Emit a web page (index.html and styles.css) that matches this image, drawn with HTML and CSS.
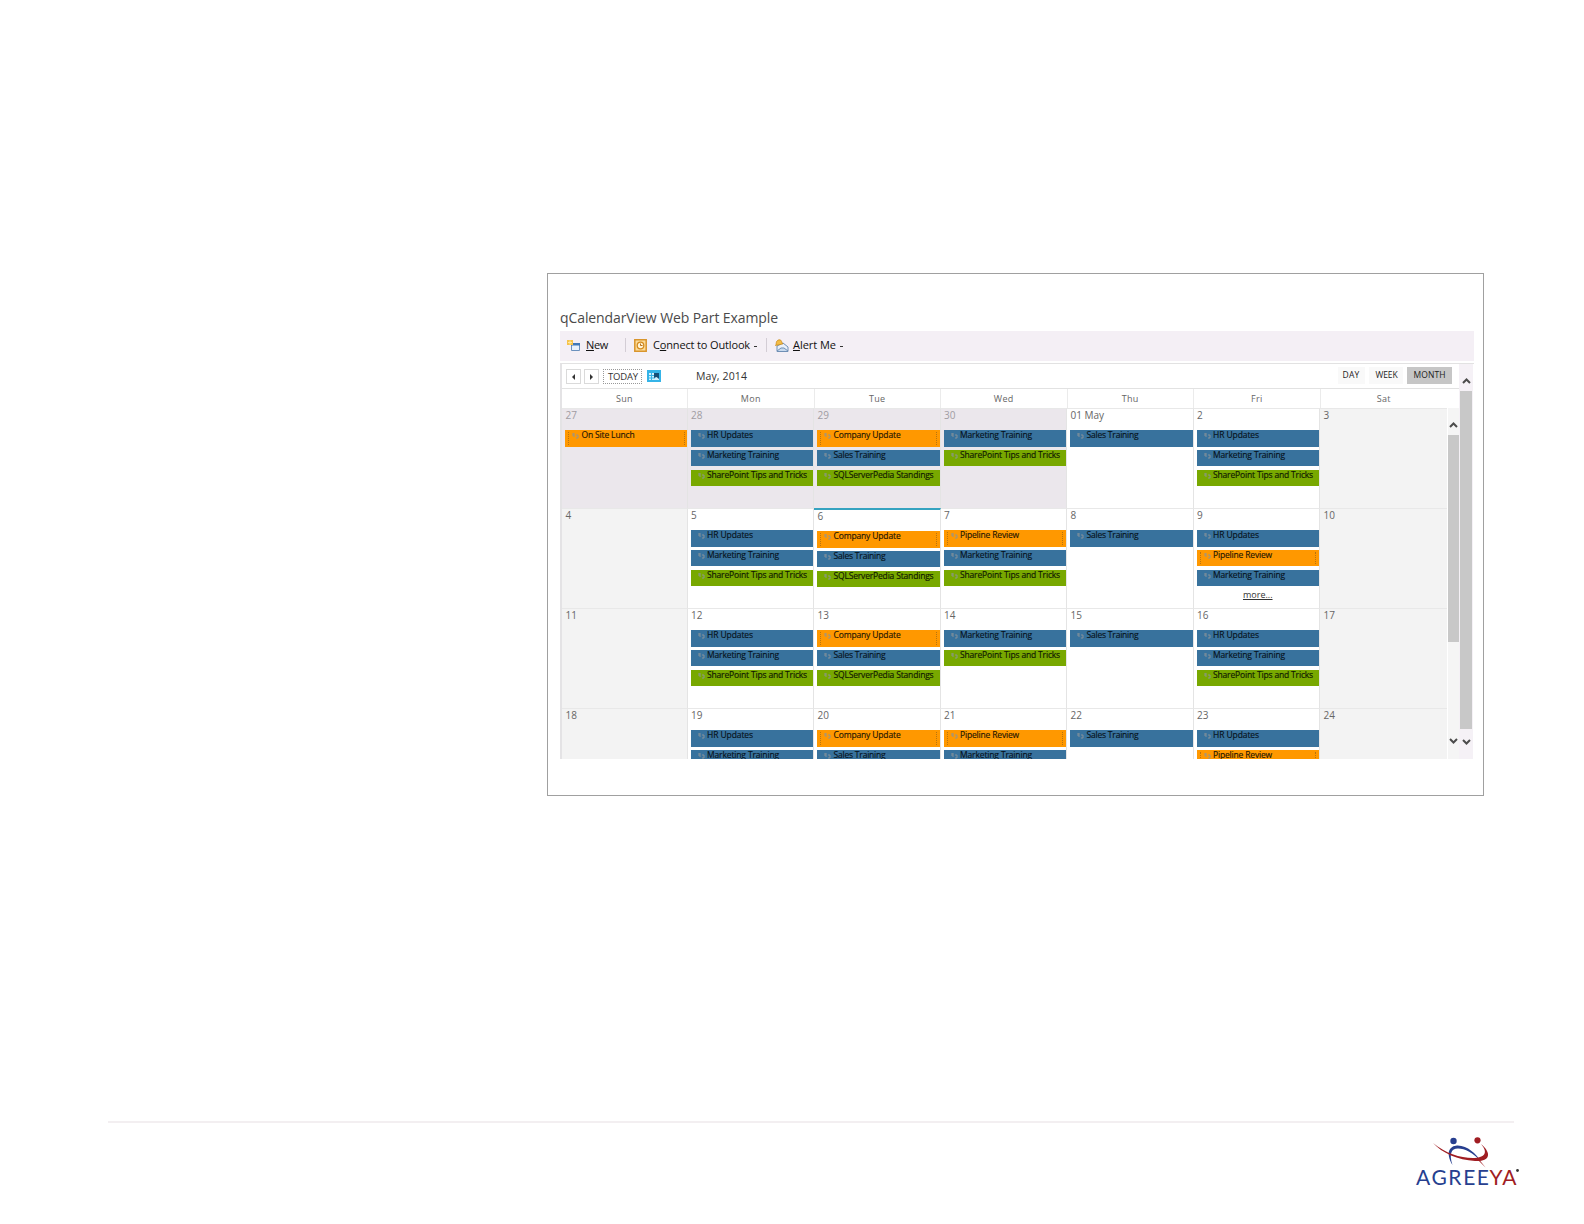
FILE: index.html
```html
<!DOCTYPE html>
<html lang="en">
<head>
<meta charset="utf-8">
<title>qCalendarView Web Part Example</title>
<link rel="stylesheet" href="styles.css">
</head>
<body>
<main class="frame">
  <h1 class="title"><span class="fit" data-w="218">qCalendarView Web Part Example</span></h1>
  <div class="toolbar">
    <svg class="tool-icon new-icon" width="13" height="12" viewBox="0 0 13 12"><path d="M4.500 4.500h8v7h-8z" fill="#e8f1fb" stroke="#6b91bd"/><path d="M4 4h9v2.500H4z" fill="#3f78b8"/><path d="M0 1h6v5H0z" fill="#f6c34b"/><path d="M1 3.500h4M3 1.500v4" stroke="#ffeaa0"/></svg>
    <span class="tool new"><span class="fit" data-w="22"><u>N</u>ew</span></span>
    <i class="sep"></i>
    <svg class="tool-icon out-icon" width="13" height="13" viewBox="0 0 13 13"><path d="M.8.8h11.400v11.400H.8z" fill="#fbdc9c" stroke="#d9952c" stroke-width="1.500"/><circle cx="6.500" cy="6.500" r="3.300" fill="#fff4d6" stroke="#d58b20" stroke-width="1.300"/><path d="M6.500 4.500v2h2" fill="none" stroke="#b8701a"/></svg>
    <span class="tool out"><span class="fit" data-w="97">C<u>o</u>nnect to Outlook</span></span><i class="caret"></i>
    <i class="sep sep2"></i>
    <svg class="tool-icon alert-icon" width="14" height="13" viewBox="0 0 14 13"><path d="M2 7l6-3 5 4v4.500H2z" fill="#eaf1fa" stroke="#6f8fb5"/><path d="M2 12l4-3h3l4 3" fill="#c8daee" stroke="#6f8fb5"/><path d="M.5 6.500C2 5 0 2 4 .8c3.500 0 2 3 4 4z" fill="#f4bd45" stroke="#c98a1d" stroke-width=".8"/></svg>
    <span class="tool alert"><span class="fit" data-w="43"><u>A</u>lert Me</span></span><i class="caret"></i>
  </div>
  <section class="calendar">
    <div class="main">
      <div class="nav">
        <span class="arrow"><svg width="3" height="6" viewBox="0 0 3 6"><path d="M3 0v6L0 3z" fill="#333"/></svg></span>
        <span class="arrow"><svg width="3" height="6" viewBox="0 0 3 6"><path d="M0 0v6l3-3z" fill="#333"/></svg></span>
        <span class="today"><span class="fit" data-w="30">TODAY</span></span>
        <svg class="picker" width="14" height="12" viewBox="0 0 14 12"><path d="M0 0h14v12H0z" fill="#35b4e8"/><path d="M2 3h10v7H2z" fill="#d4f0fc"/><path d="M2 5.500h6M2 8h6M4.500 3v7" stroke="#35b4e8"/><path d="M7 3h5v6L9.500 7 7 8z" fill="#174f78"/></svg>
        <span class="month"><span class="fit" data-w="51">May, 2014</span></span>
        <span class="view day"><span class="fit" data-w="17">DAY</span></span>
        <span class="view week"><span class="fit" data-w="22">WEEK</span></span>
        <span class="view on"><span class="fit" data-w="32">MONTH</span></span>
      </div>
      <div class="heads" id="heads"></div>
      <div class="body">
        <div class="grid" id="grid"></div>
        <div class="bar inner"><svg width="9" height="6" viewBox="0 0 9 6"><path d="M1 5l3.500-3.500L8 5" /></svg><i></i><svg width="9" height="6" viewBox="0 0 9 6"><path d="M1 1l3.500 3.500L8 1"/></svg></div>
      </div>
    </div>
    <div class="bar outer"><svg width="9" height="6" viewBox="0 0 9 6"><path d="M1 5l3.500-3.500L8 5"/></svg><i></i><svg width="9" height="6" viewBox="0 0 9 6"><path d="M1 1l3.500 3.500L8 1"/></svg></div>
  </section>
</main>
<footer class="footer">
  <svg class="logo" width="106" height="52" viewBox="0 0 106 52">
    <circle cx="38.500" cy="6" r="3.200" fill="#273f8f"/><circle cx="62.500" cy="5.300" r="3.100" fill="#a01d22"/>
    <path d="M37.500 30C30 17 35 11 42 10.500C52 10 61 19 66 26C58 18 50 13.500 43 13.500C36 13.500 34 19 37.500 30Z" fill="#273f8f"/>
    <path d="M18 8C30 18 45 23 58 23C69 23 74 18 66 9C78 19 74 27 60 26C43 25 27 18 18 8Z" fill="#a01d22"/>
    <path d="M62 22L70.500 32.500L63 25Z" fill="#a01d22"/>
    <text x="1" y="49.500" class="brand" textLength="73" lengthAdjust="spacing" fill="#273f8f">AGREE</text>
    <text x="74.500" y="49.500" class="brand" textLength="27" lengthAdjust="spacing" fill="#a01d22">YA</text>
    <circle cx="102.500" cy="35.500" r="1.400" fill="#333"/>
  </svg>
</footer>
<script src="app.js"></script>
</body>
</html>
```
FILE: styles.css
```css
* { box-sizing: border-box; }
body { margin: 0; width: 1584px; height: 1224px; overflow: hidden; background: #fff; font-family: "Open Sans", "Noto Sans", sans-serif; color: #333; }
.fit { display: inline-block; white-space: nowrap; }
.frame { margin: 273px 0 0 547px; width: 937px; height: 523px; border: 1px solid #a0a0a0; padding: 32px 10px 0 12px; }
.title { margin: 0; height: 25px; font-size: 14px; line-height: 23px; font-weight: 400; color: #4a4a4a; }
.toolbar { height: 30px; width: 914px; background: #f4eff5; display: flex; align-items: center; padding: 0 0 2px 7px; font-size: 11px; line-height: 14px; color: #111; }
.toolbar u { text-underline-offset: 1px; }
.tool.new { margin-left: 6px; width: 39px; }
.sep { width: 1px; height: 14px; background: #d3cdd5; }
.out-icon { margin-left: 8px; }
.tool.out { margin-left: 6px; }
.caret { width: 3px; height: 1px; background: #333; margin: 3px 0 0 4px; }
.sep2 { margin-left: 9px; }
.alert-icon { margin-left: 8px; }
.tool.alert { margin-left: 4px; }
.calendar { display: flex; width: 914px; height: 396px; margin-top: 2px; border-left: 2px solid #e4e3e5; border-top: 1px solid #e2e2e2; }
.main { width: 898px; }
.nav { display: flex; height: 24px; padding: 5px 0 0 4px; color: #333; }
.arrow { width: 15px; height: 15px; border: 1px solid #dadada; display: flex; align-items: center; justify-content: center; margin-right: 3px; }
.today { width: 39px; height: 15px; border: 1px dotted #999; font-size: 9.5px; line-height: 13px; padding-left: 4px; margin-left: 1px; }
.picker { margin: 1px 35px 0 5px; }
.month { font-size: 10.500px; line-height: 14px; width: 641.500px; }
.view { background: #f9f9f9; font-size: 8.500px; height: 17px; line-height: 16px; margin-top: -2px; color: #222; padding-left: 5px; width: 27px; }
.view.week { margin: -2px 4px 0; width: 34px; padding-left: 7px; }
.view.on { background: #c6c6c6; width: 45px; padding-left: 7px; }
.heads { display: grid; grid-template-columns: 126px repeat(6, 126.500px); height: 20px; border-top: 1px solid #e2e2e2; font-size: 9px; line-height: 19px; color: #666; letter-spacing: .3px; }
.heads span { text-align: center; border-right: 1px solid #ebebeb; }
.heads span:last-child { border-right: 0; }
.body { display: flex; height: 351px; overflow: hidden; }
.grid { display: grid; grid-template-columns: 125.500px repeat(6, 126.500px); grid-auto-rows: 100px; }
.cell { border-top: 1px solid #e8e8e8; border-right: 1px solid #e4e4e4; padding: 0 0 0 3px; overflow: hidden; }
.cell.week-end { background: #f3f3f3; }
.cell.past { background: #ebe7ec; }
.cell.past .date { color: #a09ca2; }
.cell:nth-child(7n) { border-right: 0; }
.cell.now { border-top: 2px solid #35a3c0; }
.date { height: 21px; font-size: 10px; line-height: 12px; color: #666; padding-left: .5px; }
.event { width: 122.500px; height: 16.500px; margin-bottom: 3.300px; background: #38729d; font-size: 8.500px; line-height: 10px; color: #07121b; display: flex; padding: 0 3px; position: relative; }
.event .fit { margin-left: 2.500px; -webkit-text-stroke: .15px currentColor; }
.event svg { margin: 2px 0 0 4px; flex: none; }
.event.orange { background: #ff9800; color: #241602; }
.event.green { background: #78a800; color: #101800; }
.event.orange::before, .event.orange::after { content: ""; position: absolute; top: 2px; bottom: 2px; left: 3px; border-left: 1px dotted #b87410; }
.event.orange::after { left: auto; right: 3px; }
.more { font-size: 9px; line-height: 12px; text-align: center; text-decoration: underline; color: #333; }
.bar { display: flex; flex-direction: column; align-items: center; }
.bar svg { fill: none; stroke: #4c4c4c; stroke-width: 2; flex: none; }
.bar i { background: #c8c8c8; }
.bar.inner { width: 12px; background: #f5f5f5; padding-top: 14px; margin-left: 1px; }
.bar.inner i { width: 11px; height: 207px; margin: 7px 0 96px; }
.bar.outer { width: 14px; background: #f5f1f6; padding-top: 14px; margin-left: -1px; }
.bar.outer i { width: 12px; height: 338px; margin: 7px 0 10px; }
.footer { margin: 325px 0 0 108px; width: 1406px; border-top: 2px solid #f3eff1; display: flex; justify-content: flex-end; padding-top: 12px; }
.logo { margin-right: -7px; flex: none; overflow: visible; }
.brand { font-family: Lato, sans-serif; font-size: 21px; }
```
FILE: app.js
```js
const names = ['Sun', 'Mon', 'Tue', 'Wed', 'Thu', 'Fri', 'Sat'];
document.getElementById('heads').innerHTML = names.map(n => `<span>${n}</span>`).join('');

const kinds = {
  L: ['On Site Lunch', 'orange', 53], C: ['Company Update', 'orange', 67], P: ['Pipeline Review', 'orange', 59],
  H: ['HR Updates', 'blue', 46], M: ['Marketing Training', 'blue', 72], S: ['Sales Training', 'blue', 52],
  T: ['SharePoint Tips and Tricks', 'green', 100], Q: ['SQLServerPedia Standings', 'green', 100]
};
const weeks = [
  ['L', 'HMT', 'CSQ', 'MT', 'S', 'HMT', ''],
  ['', 'HMT', 'CSQ', 'PMT', 'S', 'HPM+', ''],
  ['', 'HMT', 'CSQ', 'MT', 'S', 'HMT', ''],
  ['', 'HM', 'CS', 'PM', 'S', 'HP', '']
];
const icon = '<svg width="7" height="7" viewBox="0 0 7 7"><path d="M1 1v3h2M1 2h2M4 3h2v3H4" fill="none" stroke="#8c9499" stroke-width=".9"/></svg>';
let html = '';
weeks.forEach((week, r) => week.forEach((list, c) => {
  const n = 27 + r * 7 + c;
  const day = n <= 30 ? n : n - 30;
  const label = day === 1 && r === 0 ? '01 May' : day;
  const cls = ['cell'];
  if (c === 0 || c === 6) cls.push('week-end');
  if (r === 0 && c < 4) cls.push('past');
  if (r === 1 && c === 2) cls.push('now');
  html += `<div class="${cls.join(' ')}"><div class="date">${label}</div>`;
  for (const k of list) {
    if (k === '+') { html += '<div class="more">more...</div>'; continue; }
    const [text, color, w] = kinds[k];
    html += `<div class="event ${color}">${icon}<span class="fit" data-w="${w}">${text}</span></div>`;
  }
  html += '</div>';
}));
document.getElementById('grid').innerHTML = html;

document.querySelectorAll('.fit').forEach(el => {
  const chars = el.textContent.length;
  const gap = (Number(el.dataset.w) - el.getBoundingClientRect().width) / chars;
  el.style.letterSpacing = gap.toFixed(3) + 'px';
});
```
